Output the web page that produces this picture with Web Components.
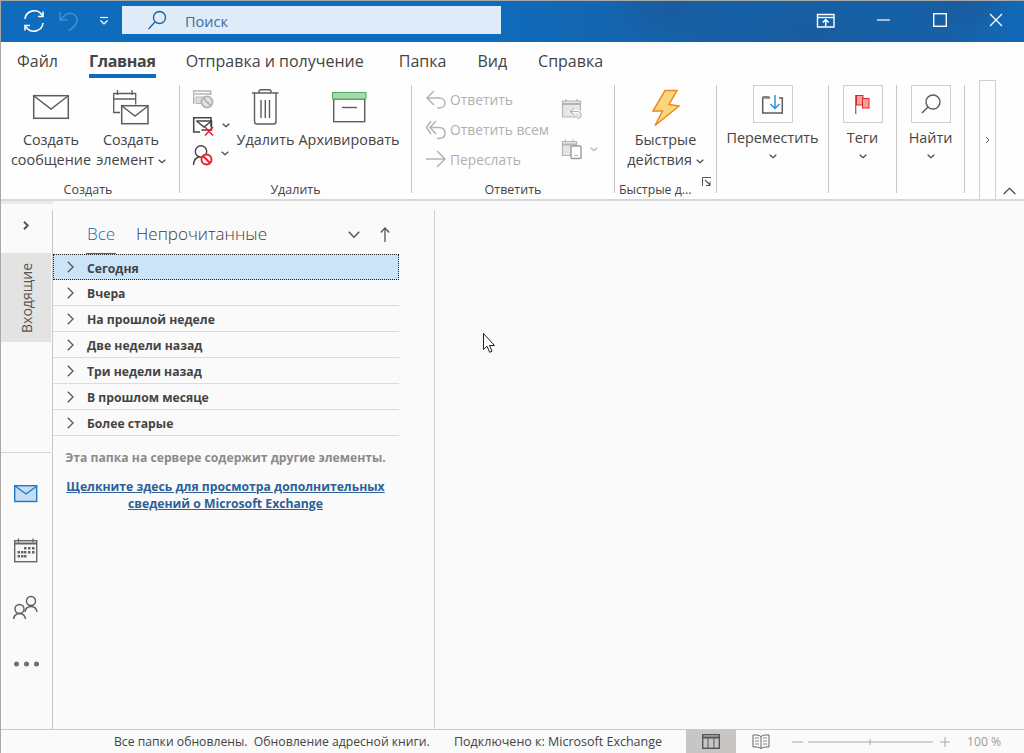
<!DOCTYPE html>
<html lang="ru">
<head>
<meta charset="utf-8">
<title>Outlook</title>
<style>
    html, body { margin: 0; height: 100%; overflow: hidden; }
    body { font-family: "Open Sans", "Noto Sans", sans-serif; color: #444; background: #fafafa; }
</style>
</head>
<body>

<template id="tpl-ol-app">
    <style>
        :host { display: flex; flex-direction: column; width: 1024px; height: 753px; box-sizing: border-box;
                border-top: 1px solid #a8a8a8; border-left: 1px solid #a8a8a8; position: relative; overflow: hidden; }
        .main { flex: 1; display: flex; min-height: 0; padding-top: 9px;
                background: linear-gradient(#ecece4, #ecece4) 0 0 / 52px 3px no-repeat #fafafa; }
        .pane { flex: 1; position: relative; }
        .cursor { position: absolute; left: 48px; top: 123px; }
    </style>
    <ol-titlebar></ol-titlebar>
    <ol-tabs></ol-tabs>
    <slot name="ribbon"></slot>
    <div class="main">
        <ol-nav></ol-nav>
        <ol-list></ol-list>
        <div class="pane">
            <svg class="cursor" width="13" height="20" viewBox="0 0 13 20"><path d="M.5.5V16.500L4 13.200 6.700 19.300 9 18.300 6.500 12.500H11.500z" fill="#fff" stroke="#222"/></svg>
        </div>
    </div>
    <ol-status></ol-status>
</template>

<template id="tpl-ol-titlebar">
    <style>
        :host { display: flex; height: 41px; flex: none; padding-left: 16px; box-sizing: border-box; color: #fff;
                background:
                    radial-gradient(ellipse 60px 30px at 670px 8px, #1a5c9e 0, transparent 100%),
                    radial-gradient(ellipse 70px 30px at 810px 30px, #1a5c9e 0, transparent 100%),
                    radial-gradient(ellipse 50px 24px at 960px 5px, #1a5c9e 0, transparent 100%),
                    linear-gradient(90deg, #0f6cbd 0, #0f6cbd 480px, #1660a6 700px, #1660a6 950px, #1169b8 100%); }
        .cell { display: flex; align-items: center; justify-content: center; height: 28px; margin-top: 6px; }
        .search { width: 379px; height: 28px; margin-top: 5px; background: #deebf8; display: flex;
                  align-items: center; box-sizing: border-box; padding-left: 26px; color: #3e6c9c; font-size: 14.5px; }
        .search span { margin-left: 18px; padding-top: 3px; }
        .right { margin-left: auto; display: flex; }
        .right .cell { margin-top: 5px; }
    </style>
    <div class="cell" style="width:34px"><ol-icon name="sync"></ol-icon></div>
    <div class="cell" style="width:34px"><ol-icon name="undo"></ol-icon></div>
    <div class="cell" style="width:37px"><ol-icon name="qat"></ol-icon></div>
    <div class="search"><ol-icon name="find"></ol-icon><span>Поиск</span></div>
    <div class="right">
        <div class="cell" style="width:58px"><ol-icon name="restore"></ol-icon></div>
        <div class="cell" style="width:58px"><ol-icon name="min"></ol-icon></div>
        <div class="cell" style="width:56px"><ol-icon name="max"></ol-icon></div>
        <div class="cell" style="width:56px"><ol-icon name="close"></ol-icon></div>
    </div>
</template>

<template id="tpl-ol-tabs">
    <style>
        :host { display: flex; flex: none; gap: 31px; height: 38px; padding-left: 16px; box-sizing: border-box;
                background: #fefefe; font-size: 16px; color: #444; }
        .t { height: 36px; line-height: 38px; box-sizing: border-box; border-bottom: 4px solid transparent; white-space: nowrap; }
        .on { font-weight: 700; letter-spacing: -.3px; border-bottom-color: #0f6cbd; margin-right: -1px; }
    </style>
    <div class="t">Файл</div>
    <div class="t on">Главная</div>
    <div class="t" style="margin-right:4px">Отправка и получение</div>
    <div class="t">Папка</div>
    <div class="t">Вид</div>
    <div class="t">Справка</div>
</template>

<template id="tpl-ol-ribbon">
    <style>
        :host { display: flex; flex: none; height: 121px; box-sizing: border-box; background: #fefefe;
                border-bottom: 2px solid #d8d8d8; font-size: 14.4px; color: #444; }
        .more { width: 17px; height: 119px; margin-left: 14px; border: 1px solid #cfcfcf; border-bottom: 0; box-sizing: border-box;
                display: flex; align-items: center; justify-content: center; }
        .up { margin-left: auto; display: flex; align-items: flex-start; padding: 107px 8px 0 0; }
    </style>
    <slot></slot>
    <div class="more"><ol-icon name="chevr"></ol-icon></div>
    <div class="up"><ol-icon name="chevu"></ol-icon></div>
</template>

<template id="tpl-ol-group">
    <style>
        :host { display: flex; flex-direction: column; flex: none; box-sizing: border-box; height: 108px; margin-top: 5px;
                border-right: 1px solid #c6c6c6; }
        .body { flex: 1; display: flex; min-height: 0; }
        .label { height: 16px; line-height: 26px; font-size: 12.5px; text-align: center; white-space: nowrap; padding-right: var(--label-shift, 0); }
        :host([launcher]) .label { display: flex; justify-content: space-between; padding: 0 4px; text-align: left; font-size: 12.300px; }
    </style>
    <div class="body"><slot></slot></div>
    <div class="label"><span id="lab"></span><slot name="launcher"></slot></div>
</template>

<template id="tpl-ol-big">
    <style>
        :host { display: flex; flex-direction: column; align-items: center; flex: none; }
        .ic { height: 44px; display: flex; align-items: center; justify-content: center; }
        .tx { margin-top: 1px; line-height: 20px; text-align: center; white-space: nowrap; }
    </style>
    <div class="ic"><slot name="icon"></slot></div>
    <div class="tx"><slot></slot></div>
</template>

<template id="tpl-ol-boxbtn">
    <style>
        :host { display: flex; flex-direction: column; align-items: center; width: 100%; }
        .box { width: 40px; height: 38px; border: 1px solid #cdcdcd; box-sizing: border-box; display: flex;
               align-items: center; justify-content: center; }
        .tx { margin-top: 5px; line-height: 20px; white-space: nowrap; }
        .ch { line-height: 0; margin-top: 6px; }
    </style>
    <div class="box"><slot name="icon"></slot></div>
    <div class="tx"><slot></slot></div>
    <div class="ch"><ol-icon name="chevd"></ol-icon></div>
</template>

<template id="tpl-ol-nav">
    <style>
        :host { display: flex; flex-direction: column; align-items: center; flex: none; width: 52px; box-sizing: border-box;
                border-right: 1px solid #c8c8c8; padding-right: 1px; }
        .top { height: 43px; box-sizing: border-box; padding-top: 11px; display: flex; align-items: flex-start; justify-content: center; margin-right: 1px; }
        .folder { width: 100%; height: 89px; background: #e3e3e3; display: flex; align-items: center; justify-content: center; }
        .folder span { writing-mode: vertical-rl; transform: rotate(180deg); font-size: 14px; color: #555; white-space: nowrap; }
        .sep { width: 100%; border-top: 1px solid #d6d6d6; margin-top: 110px; height: 32px; }
        .i { display: flex; align-items: flex-start; justify-content: center; margin-right: 1px; }
    </style>
    <div class="top"><ol-icon name="navchev"></ol-icon></div>
    <div class="folder"><span>Входящие</span></div>
    <div class="sep"></div>
    <div class="i" style="height:53px"><ol-icon name="navmail"></ol-icon></div>
    <div class="i" style="height:58px"><ol-icon name="navcal"></ol-icon></div>
    <div class="i" style="height:65px"><ol-icon name="navpeople"></ol-icon></div>
    <div class="i"><ol-icon name="navmore"></ol-icon></div>
</template>

<template id="tpl-ol-list">
    <style>
        :host { display: block; flex: none; width: 382px; box-sizing: border-box; border-right: 1px solid #d0d0d0; padding-right: 35px; }
        .head { display: flex; height: 44px; box-sizing: border-box; padding-left: 33px; font-size: 17px; font-weight: 300; color: #3c3c3c; line-height: 48px; }
        .all { color: #0f6cbd; border-bottom: 1px solid #0f6cbd; height: 44px; box-sizing: border-box; padding: 0 1px; margin-right: 20px; }
        .sort { margin-left: auto; display: flex; align-items: center; gap: 20px; padding: 4px 9px 0 0; }
        .sort ol-icon:first-child { margin-top: 2px; }
        .msg { text-align: center; font-size: 12.2px; font-weight: 700; padding-top: 13px; margin-left: 6px; width: 333px; color: #8a8a8a; line-height: 17px; }
        a { display: block; margin-top: 12px; color: #2b6098; text-decoration: underline; }
    </style>
    <div class="head">
        <span class="all">Все</span><span>Непрочитанные</span>
        <div class="sort"><ol-icon name="sortd"></ol-icon><ol-icon name="sortu"></ol-icon></div>
    </div>
    <ol-row selected>Сегодня</ol-row>
    <ol-row>Вчера</ol-row>
    <ol-row>На прошлой неделе</ol-row>
    <ol-row>Две недели назад</ol-row>
    <ol-row>Три недели назад</ol-row>
    <ol-row>В прошлом месяце</ol-row>
    <ol-row>Более старые</ol-row>
    <div class="msg">Эта папка на сервере содержит другие элементы.
        <a>Щелкните здесь для просмотра дополнительных сведений о Microsoft Exchange</a>
    </div>
</template>

<template id="tpl-ol-row">
    <style>
        :host { display: flex; align-items: center; height: 26px; box-sizing: border-box; border-bottom: 1px solid #dcdcdc;
                padding-left: 14px; font-size: 12.2px; font-weight: 700; color: #444; }
        :host([selected]) { border: 1px dotted #222; background: #cce4f7; padding-left: 13px; }
        :host([selected]) span { padding-top: 2px; }
        span { margin-left: 13px; padding-top: 1px; }
    </style>
    <ol-icon name="rowchev"></ol-icon><span><slot></slot></span>
</template>

<template id="tpl-ol-status">
    <style>
        :host { display: flex; align-items: center; flex: none; height: 24px; box-sizing: border-box; border-top: 1px solid #cacaca;
                background: #fafafa; font-size: 12.2px; color: #444; white-space: nowrap; }
        .a { margin-left: 113px; width: 340px; }
        .b { width: 232px; font-size: 12.500px; }
        .v { width: 50px; height: 23px; display: flex; align-items: center; justify-content: center; }
        .on { background: #c8c6c4; }
        .z { display: flex; align-items: center; margin-left: 6px; }
        .pc { margin-left: 18px; color: #9a9a9a; }
    </style>
    <span class="a">Все папки обновлены.&nbsp; Обновление адресной книги.</span>
    <span class="b">Подключено к: Microsoft Exchange</span>
    <div class="v on"><ol-icon name="vnormal"></ol-icon></div>
    <div class="v"><ol-icon name="vread"></ol-icon></div>
    <div class="z"><ol-icon name="zoom"></ol-icon></div>
    <span class="pc">100 %</span>
</template>

<ol-app>
    <ol-ribbon slot="ribbon">
        <ol-group label="Создать" style="width:179px;--label-shift:4px">
            <div style="width:9px"></div>
            <ol-big style="width:82px"><ol-icon slot="icon" name="env"></ol-icon>Создать<br>сообщение</ol-big>
            <ol-big style="width:78px"><ol-icon slot="icon" name="calenv"></ol-icon>Создать<br>элемент <ol-icon name="chevd"></ol-icon></ol-big>
        </ol-group>
        <ol-group label="Удалить" style="width:232px">
            <ol-col style="width:56px;padding-left:13px;box-sizing:border-box">
                <ol-small><ol-icon name="ignore"></ol-icon></ol-small>
                <ol-small><ol-icon name="clean"></ol-icon><ol-icon name="chevd" style="margin-bottom:3px"></ol-icon></ol-small>
                <ol-small><ol-icon name="block"></ol-icon><ol-icon name="chevd" style="margin-bottom:3px"></ol-icon></ol-small>
            </ol-col>
            <ol-big style="width:59px"><ol-icon slot="icon" name="trash"></ol-icon>Удалить</ol-big>
            <ol-big style="width:108px"><ol-icon slot="icon" name="archive"></ol-icon>Архивировать</ol-big>
        </ol-group>
        <ol-group label="Ответить" style="width:203px">
            <ol-col style="width:150px;margin-top:-1px;padding-left:14px;color:#b0b0b0;box-sizing:border-box;font-size:13.8px">
                <ol-small gap><ol-icon name="reply"></ol-icon>Ответить</ol-small>
                <ol-small gap><ol-icon name="replyall"></ol-icon>Ответить всем</ol-small>
                <ol-small gap><ol-icon name="forward"></ol-icon>Переслать</ol-small>
            </ol-col>
            <ol-col style="padding-top:4px">
                <ol-small tall><ol-icon name="calreply"></ol-icon></ol-small>
                <ol-small tall><ol-icon name="calphone"></ol-icon><ol-icon name="chevg"></ol-icon></ol-small>
            </ol-col>
        </ol-group>
        <ol-group label="Быстрые д..." launcher style="width:102px">
            <ol-big style="width:101px"><ol-icon slot="icon" name="bolt"></ol-icon>Быстрые<br>действия <ol-icon name="chevd"></ol-icon></ol-big>
            <ol-icon slot="launcher" name="launch"></ol-icon>
        </ol-group>
        <ol-group style="width:112px">
            <ol-boxbtn><ol-icon slot="icon" name="move"></ol-icon>Переместить</ol-boxbtn>
        </ol-group>
        <ol-group style="width:68px">
            <ol-boxbtn><ol-icon slot="icon" name="flag"></ol-icon>Теги</ol-boxbtn>
        </ol-group>
        <ol-group style="width:68px">
            <ol-boxbtn><ol-icon slot="icon" name="lens"></ol-icon>Найти</ol-boxbtn>
        </ol-group>
    </ol-ribbon>
</ol-app>

<script>
    (function () {
        'use strict'

        // viewBox uses the coordinates read off the screenshot, so shapes can be tuned directly
        const G = '#5c5c5c', L = '#b4b4b4';
        const ICONS = {
            sync: ['24 12 20 20', `<g fill="none" stroke="#fff" stroke-width="1.6"><path d="M25 20a9.3 9.3 0 0 1 16.6-4.6l1 1.4"/><path d="M43 12.5v5h-5"/><path d="M43 24a9.3 9.3 0 0 1-16.6 4.6l-1-1.4"/><path d="M25 31.5v-5h5"/></g>`],
            undo: ['60 12 19 21', `<g fill="none" stroke="#3f8ed6" stroke-width="1.6"><path d="M61 13v8h8"/><path d="M61 21l6-5.500c5-3 11 0 11 6 0 5-4 7-8 10"/></g>`],
            qat: ['99 16 10 10', `<g fill="none" stroke="#fff" stroke-width="1.2"><path d="M100 17.500h8"/><path d="M100.500 20.500l3.500 3.500 3.500-3.500"/></g>`],
            find: ['148 10 19 19', `<g fill="none" stroke="#1f5d9c" stroke-width="1.3"><circle cx="159.500" cy="16.500" r="6"/><path d="M155 21l-6.500 7"/></g>`],
            restore: ['816 12 19 15', `<path d="M817.500 13.500h16.500v12.500h-16.500z" fill="#1660a6" stroke="#fff" stroke-width="1.400"/><path d="M818 16.500h16" stroke="#fff" stroke-width="1.400"/><path d="M825.700 25v-6.500M822.700 21.500l3-3 3 3" stroke="#fff" stroke-width="1.500" fill="none"/>`],
            min: ['877 19 13 2', `<path d="M877 20h13" stroke="#fff" stroke-width="1.200"/>`],
            max: ['933 13 14 14', `<rect x="933.700" y="13.700" width="12.600" height="12.600" fill="none" stroke="#fff" stroke-width="1.400"/>`],
            close: ['990 13 14 14', `<path d="M991 14l12 12M1003 14l-12 12" stroke="#fff" stroke-width="1.300"/>`],
            chevd: ['0 0 8 5', `<path d="M.7.7L4 3.800 7.300.7" fill="none" stroke="#444" stroke-width="1.200"/>`, 8, 5],
            chevg: ['0 0 8 5', `<path d="M.7.7L4 3.800 7.300.7" fill="none" stroke="#b4b4b4" stroke-width="1.200"/>`, 8, 5],
            chevr: ['0 0 5 8', `<path d="M1 1l3 3-3 3" fill="none" stroke="#666" stroke-width="1"/>`, 5, 8],
            chevu: ['0 0 13 8', `<path d="M.7 7L6.500 1.300 12.300 7" fill="none" stroke="#444" stroke-width="1.200"/>`, 13, 8],
            env: ['33 94 36 24', `<g fill="none" stroke="${G}" stroke-width="1.500"><rect x="33.700" y="94.700" width="34.600" height="22.600"/><path d="M34 95l17 13 17-13"/></g>`],
            calenv: ['114 89 36 36', `<g fill="none" stroke="${G}" stroke-width="1.300"><path d="M121 112.500h-6.300v-19h22v11M115 99h22M118.500 90v5M133 90v5"/></g><g fill="#fefefe" stroke="${G}" stroke-width="1.500"><rect x="122.700" y="105.700" width="26.300" height="18"/></g><path d="M123 106l13 10 13-10" fill="none" stroke="${G}" stroke-width="1.400"/>`],
            ignore: ['194 89 20 19', `<g fill="none" stroke="${L}" stroke-width="1.500"><path d="M194.700 103v-13h17v4M196 93h16"/></g><path d="M197 96h9v6.500h-9z" fill="#ddd" stroke="${L}"/><circle cx="208" cy="101" r="5.600" fill="#e2e2e2" stroke="${L}" stroke-width="1.800"/><path d="M204 97l8 8" stroke="${L}" stroke-width="1.800"/>`],
            clean: ['194 118 21 20', `<g fill="none" stroke="#444" stroke-width="1.500"><path d="M201 133h-6.300v-14.300h17.300v9"/><path d="M197.500 122h15v9h-10"/><path d="M197.500 122l7.500 6 7.500-6"/></g><path d="M206 128l8 8.500M214 128l-8 8.500" stroke="#e8202a" stroke-width="1.500"/>`],
            block: ['195 145 20 21', `<g fill="none" stroke="#444" stroke-width="1.400"><circle cx="203" cy="151.500" r="5.700"/><path d="M195.500 165c0-5 3-7.500 6-8.500"/></g><circle cx="208.500" cy="159.500" r="5" fill="#fefefe" stroke="#e8202a" stroke-width="1.900"/><path d="M205 156l7 7" stroke="#e8202a" stroke-width="1.900"/>`],
            trash: ['253 89 27 36', `<g fill="none" stroke="${G}" stroke-width="1.400"><path d="M253 93h26.500M260 93v-1.500c0-1 1-1.800 2-1.800h8c1 0 2 .8 2 1.800v1.500M255.500 93v28.500c0 1.500 1 2.500 2.500 2.500h16.500c1.500 0 2.500-1 2.500-2.500v-28.500"/><path d="M262 100v18M266.300 100v18M270.500 100v18"/></g>`],
            archive: ['332 92 35 31', `<rect x="333.700" y="99" width="31" height="22.700" fill="#fefefe" stroke="${G}" stroke-width="1.400"/><rect x="332.500" y="92.500" width="33.500" height="6.500" fill="#a5dba5" stroke="#4fa668"/><path d="M342 107.500h15" stroke="${G}" stroke-width="1.400"/>`],
            reply: ['426 90 20 19', `<g fill="none" stroke="${L}" stroke-width="1.500"><path d="M434 91l-7 7 7 7M427 98h12c4 0 6 2.500 6 5s-2 5-6 5h-2"/></g>`],
            replyall: ['426 120 20 19', `<g fill="none" stroke="${L}" stroke-width="1.500"><path d="M431 121l-4.500 6.500 4.500 6.500M436 121l-6 6.500 6 6.500M430 127.500h9c4 0 6 2.500 6 5.500s-2 5.500-6 5.500h-2"/></g>`],
            forward: ['426 151 20 18', `<g fill="none" stroke="${L}" stroke-width="1.500"><path d="M426 160h18.500M437 152l8 8-8 8"/></g>`],
            calreply: ['563 99 21 20', `<path d="M563.500 101h18v16h-18z" fill="#e6e6e6" stroke="${L}" stroke-width="1.200"/><path d="M563.500 104h18" stroke="${L}" stroke-width="2"/><path d="M567 99v3M578 99v3" stroke="${L}" stroke-width="1.200"/><path d="M575 108l-4 3.500 4 3.500M571 111.500h7c3 0 4 2 4 3.500s-1 3-3.500 3.500" fill="none" stroke="#fff" stroke-width="2.800"/><path d="M575 108l-4 3.500 4 3.500M571 111.500h7c3 0 4 2 4 3.500s-1 3-3.500 3.500" fill="none" stroke="${L}" stroke-width="1.200"/>`],
            calphone: ['563 139 20 20', `<path d="M563.500 141.500h14v14h-14z" fill="#e6e6e6" stroke="${L}" stroke-width="1.200"/><path d="M563.500 144.500h14" stroke="${L}" stroke-width="2"/><path d="M566.500 139.500v3M574 139.500v3" stroke="${L}" stroke-width="1.200"/><rect x="572" y="146" width="10" height="12.500" rx="1" fill="#fefefe" stroke="#9c9c9c" stroke-width="1.400"/><path d="M575 155.500h4" stroke="${L}"/>`],
            bolt: ['652 88 28 37', `<path d="M665 89.500h12l-8 14 10 1.500-24 19.500 7.500-14.500h-9.500z" fill="#fad77e" stroke="#ea8b1c" stroke-width="1.500" stroke-linejoin="miter"/>`],
            launch: ['0 0 10 10', `<path d="M.5 9V.5H9" fill="none" stroke="#555"/><path d="M3 3l5 5M8 4.500V8.500H4" fill="none" stroke="#555" stroke-width="1.100"/>`, 10, 10],
            move: ['763 94 21 19', `<path d="M763.700 96h6l1 1.500M780 97h3.300v15h-19.600v-16" fill="none" stroke="${G}" stroke-width="1.500"/><path d="M763.700 96h7v1.800h-7z" fill="#888"/><path d="M776 94v13M771.500 103l4.500 4.500 4.500-4.500" fill="none" stroke="#2f94dc" stroke-width="1.500"/>`],
            flag: ['855 93 15 21', `<path d="M855.700 94v19" stroke="#777" stroke-width="1.300"/><rect x="856.500" y="94.500" width="6.500" height="9.500" fill="#f8a0a0" stroke="#d8282e"/><rect x="862.500" y="97.500" width="6.500" height="9.500" fill="#f8a0a0" stroke="#d8282e"/>`],
            lens: ['921 94 20 20', `<g fill="none" stroke="${G}" stroke-width="1.400"><circle cx="933" cy="102" r="7"/><path d="M928 107l-6 6"/></g>`],
            navchev: ['0 0 6 9', `<path d="M1 .7L4.700 4.500 1 8.300" fill="none" stroke="#555" stroke-width="2"/>`, 6, 9],
            navmail: ['14 485 24 17', `<rect x="14.700" y="485.700" width="22" height="15.800" fill="#c2ddf5" stroke="#1f78c8" stroke-width="1.400"/><path d="M15 486l11 8 11-8" fill="none" stroke="#1f78c8" stroke-width="1.400"/>`],
            navcal: ['14 538 24 25', `<rect x="14.700" y="540.700" width="22" height="21" fill="none" stroke="#666" stroke-width="1.400"/><path d="M15 543.500h22" stroke="#666" stroke-width="2"/><path d="M18.500 538.500v4M33 538.500v4" stroke="#666" stroke-width="1.300"/><path d="M24 547h2.500v2.500H24zM28 547h2.500v2.500H28zM32 547h2.500v2.500H32zM17.500 551h2.500v2.500h-2.500zM21 551h2.500v2.500H21zM24 551h2.500v2.500H24zM28 551h2.500v2.500H28zM32 551h2.500v2.500H32zM17.500 555h2.500v2.500h-2.500zM21 555h2.500v2.500H21zM24 555h2.500v2.500H24z" fill="#666"/>`],
            navpeople: ['13 596 25 24', `<g fill="none" stroke="#5a5a5a" stroke-width="1.400"><circle cx="31" cy="601" r="4.500"/><path d="M25 612c0-3 2.500-5.500 6-5.500s5.500 2 6 5.500"/><circle cx="19.500" cy="609" r="4.500"/><path d="M13.700 619c0-3 2.500-5.500 5.800-5.500s5.500 2.500 6 5.500"/></g>`],
            navmore: ['12 661 26 6', `<circle cx="15.500" cy="664" r="2.500" fill="#707070"/><circle cx="25.500" cy="664" r="2.500" fill="#707070"/><circle cx="35.500" cy="664" r="2.500" fill="#707070"/>`],
            sortd: ['0 0 12 8', `<path d="M.8.8L6 6.200 11.200.8" fill="none" stroke="#555" stroke-width="1.500"/>`, 12, 8],
            sortu: ['0 0 10 15', `<path d="M5 15V1M.8 5.500L5 1l4.200 4.500" fill="none" stroke="#555" stroke-width="1.300"/>`, 10, 15],
            rowchev: ['0 0 7 12', `<path d="M.8.8L6 6 .8 11.200" fill="none" stroke="#555" stroke-width="1.300"/>`, 7, 12],
            vnormal: ['0 0 18 15', `<rect x=".7" y=".7" width="16.600" height="13.600" fill="none" stroke="#555" stroke-width="1.400"/><path d="M.7 3.500h16.600" stroke="#555" stroke-width="2"/><path d="M6 4v10M12 4v10" stroke="#555"/>`, 18, 15],
            vread: ['0 0 18 16', `<path d="M9 2.500C7 1 4 .8 1 1v12c3-.2 6 0 8 1.500 2-1.500 5-1.700 8-1.500V1c-3-.2-6 0-8 1.500zM9 2.500v12" fill="none" stroke="#666"/><path d="M3 4h4M3 7h4M3 10h4M11 4h4M11 7h4M11 10h4" stroke="#888"/>`, 18, 16],
            zoom: ['0 0 157 12', `<path d="M0 6h11M16 6h125M78 3v6" stroke="#a8a8a8"/><path d="M148 6h10M153 1v10" stroke="#a8a8a8"/>`, 157, 12],
        };

        // Base: clones template "tpl-<tag>" into an open shadow root
        class ShadowEl extends HTMLElement {
            constructor() {
                super();
                const shadowRoot = this.attachShadow({ mode: 'open' });
                const templ = document.getElementById('tpl-' + this.localName);
                shadowRoot.appendChild(document.importNode(templ.content, true));
            }
        }

        class OlIcon extends HTMLElement {
            constructor() {
                super();
                this.attachShadow({ mode: 'open' });
            }
            connectedCallback() {
                const ic = ICONS[this.getAttribute('name')];
                const vb = ic[0].split(' ');
                const w = ic[2] || vb[2], h = ic[3] || vb[3];
                this.shadowRoot.innerHTML = `<style>:host{display:inline-block;line-height:0;vertical-align:middle}svg{display:block;overflow:visible}</style>
                    <svg width="${w}" height="${h}" viewBox="${ic[0]}">${ic[1]}</svg>`;
            }
        }

        class OlGroup extends ShadowEl {
            connectedCallback() {
                this.shadowRoot.getElementById('lab').textContent = this.getAttribute('label') || '';
            }
        }

        class OlCol extends HTMLElement {
            constructor() {
                super();
                this.attachShadow({ mode: 'open' }).innerHTML = `<style>:host{display:flex;flex-direction:column;flex:none}</style><slot></slot>`;
            }
        }

        class OlSmall extends HTMLElement {
            constructor() {
                super();
                this.attachShadow({ mode: 'open' }).innerHTML = `<style>
                    :host{display:flex;align-items:center;height:28px;gap:8px;white-space:nowrap}
                    :host([gap]){height:30px;gap:4px}
                    :host([tall]){height:40px}
                </style><slot></slot>`;
            }
        }

        customElements.define('ol-icon', OlIcon);
        customElements.define('ol-col', OlCol);
        customElements.define('ol-small', OlSmall);
        customElements.define('ol-group', OlGroup);
        ['ol-titlebar', 'ol-tabs', 'ol-ribbon', 'ol-big', 'ol-boxbtn', 'ol-nav', 'ol-list', 'ol-row', 'ol-status', 'ol-app']
            .forEach(function (tag) {
                customElements.define(tag, class extends ShadowEl {});
            });
    })();
</script>
</body>
</html>
